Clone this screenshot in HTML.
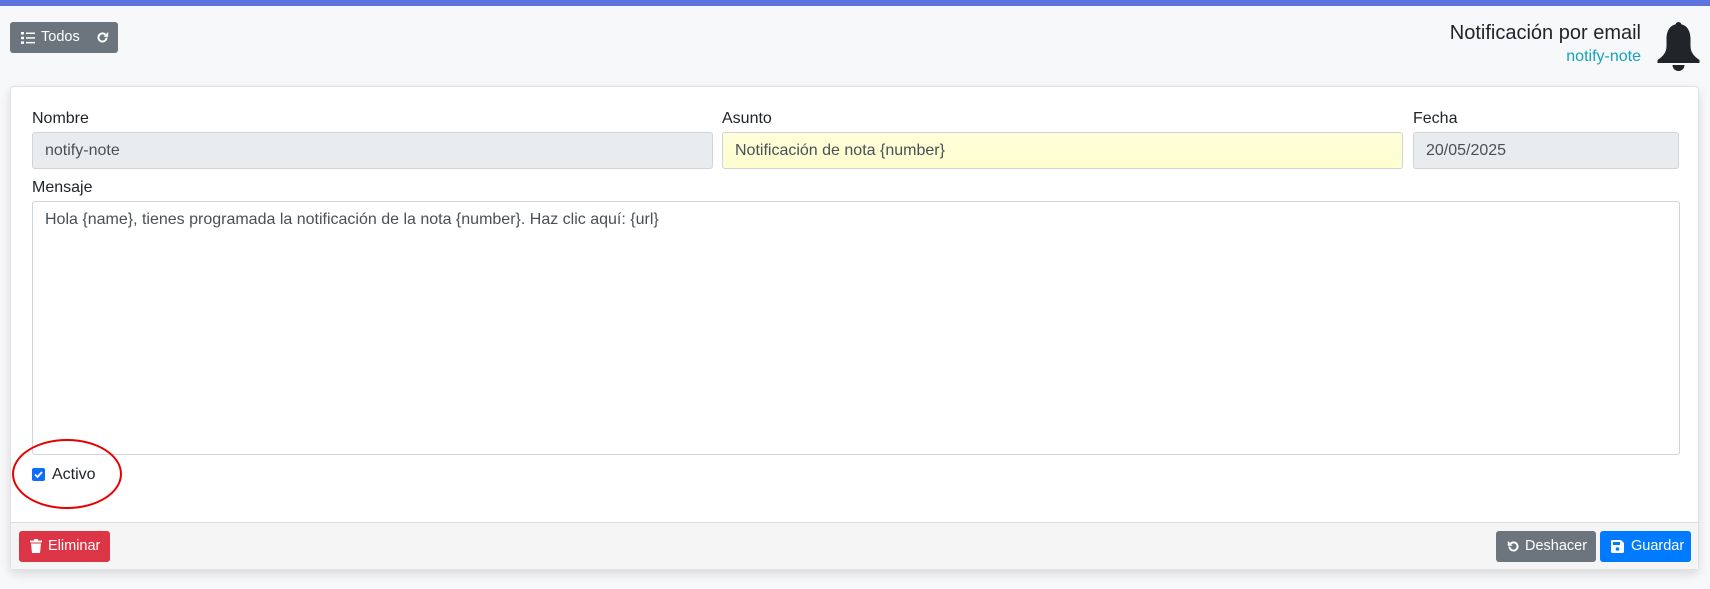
<!DOCTYPE html>
<html><head><meta charset="utf-8"><style>
*{box-sizing:border-box;margin:0;padding:0}
body{width:1710px;height:589px;background:#f7f8fa;font-family:"Liberation Sans",sans-serif;font-size:16px;color:#212529;position:relative;overflow:hidden}
.top{position:absolute;left:0;top:0;width:1710px;height:6px;background:#5f73e0}
.btn{position:absolute;border-radius:3px;color:#fff;font-size:14.5px}
.btn svg{position:absolute;display:block}
.btn span{position:absolute;line-height:31px;top:0}
.card{position:absolute;left:10px;top:86px;width:1689px;height:484px;background:#fff;border:1px solid #dfe1e4;border-radius:4px;box-shadow:0 4px 10px rgba(0,0,0,.12)}
.footer{position:absolute;left:0;right:0;bottom:0;height:47px;background:#f5f5f5;border-top:1px solid #dcdcdc}
.lbl{position:absolute;font-size:16px}
.inp{position:absolute;height:37px;border:1px solid #ced4da;border-radius:3px;padding:0 12px;line-height:35px;color:#495057}
</style></head><body>
<div class="top"></div>
<div class="btn" style="left:10px;top:22px;width:108px;height:31px;background:#6c757d">
<svg style="left:11px;top:10px" width="14" height="12" viewBox="0 0 14 12" fill="#fff"><rect x="0" y="0" width="3" height="2.5"/><rect x="0" y="4.7" width="3" height="2.5"/><rect x="0" y="9.4" width="3" height="2.5"/><rect x="5" y="0.5" width="9" height="1.5"/><rect x="5" y="5.2" width="9" height="1.5"/><rect x="5" y="9.9" width="9" height="1.5"/></svg>
<span style="left:31px">Todos</span>
<svg style="left:86px;top:9px" width="13" height="13" viewBox="0 0 16 16"><path d="M13 8a5 5 0 1 1-1.5-3.6" fill="none" stroke="#fff" stroke-width="2.4"/><path d="M15 1v6h-6z" fill="#fff"/></svg>
</div>
<div style="position:absolute;right:69px;top:22px;font-size:20px;color:#212529">Notificación por email</div>
<div style="position:absolute;right:69px;top:48px;font-size:16px;color:#17a2b8">notify-note</div>
<svg style="position:absolute;left:1657px;top:22px" width="43" height="49" viewBox="0 0 43 49"><circle cx="21.5" cy="3" r="3" fill="#212529"/><path d="M21.5 2C13 2 9.5 9 9.5 17v7c0 6-3 10-9 14v3h42v-3c-6-4-9-8-9-14v-7c0-8-3.5-15-12-15z" fill="#212529"/><path d="M15.5 43h12a6 6 0 0 1-12 0z" fill="#212529"/></svg>
<div class="card">
<div class="lbl" style="left:21px;top:23px">Nombre</div>
<div class="lbl" style="left:711px;top:23px">Asunto</div>
<div class="lbl" style="left:1402px;top:23px">Fecha</div>
<div class="inp" style="left:21px;top:45px;width:681px;background:#e9ecef">notify-note</div>
<div class="inp" style="left:711px;top:45px;width:681px;background:linear-gradient(#fffed8,#fefed0)">Notificación de nota {number}</div>
<div class="inp" style="left:1402px;top:45px;width:266px;background:#e9ecef">20/05/2025</div>
<div class="lbl" style="left:21px;top:92px">Mensaje</div>
<div class="inp" style="left:21px;top:114px;width:1648px;height:254px;background:#fff;line-height:1.5;padding-top:6px">Hola {name}, tienes programada la notificación de la nota {number}. Haz clic aquí: {url}</div>
<div style="position:absolute;left:21px;top:381px;width:13px;height:13px;background:#0d6efd;border-radius:2px"><svg width="13" height="13" viewBox="0 0 13 13"><path d="M3 6.5l2.5 2.5 4.5-5" fill="none" stroke="#fff" stroke-width="1.8"/></svg></div>
<div class="lbl" style="left:41px;top:379px">Activo</div>
<div style="position:absolute;left:1px;top:352px;width:110px;height:70px;border:2.5px solid #e80000;border-radius:50%"></div>
<div class="footer">
<div class="btn" style="left:8px;top:8px;width:91px;height:31px;background:#dc3545">
<svg style="left:11px;top:8px" width="12" height="14" viewBox="0 0 12 14" fill="#fff"><rect x="0" y="1.5" width="12" height="2"/><rect x="4" y="0" width="4" height="2"/><path d="M1 4.5h10l-1 9.5H2z"/></svg>
<span style="left:29px">Eliminar</span></div>
<div class="btn" style="left:1485px;top:8px;width:100px;height:31px;background:#6c757d">
<svg style="left:11px;top:9px" width="13" height="13" viewBox="0 0 16 16"><path d="M3 8a5 5 0 1 0 1.5-3.6" fill="none" stroke="#fff" stroke-width="2.4"/><path d="M1 1v6h6z" fill="#fff"/></svg>
<span style="left:29px">Deshacer</span></div>
<div class="btn" style="left:1589px;top:8px;width:91px;height:31px;background:#007bff">
<svg style="left:11px;top:9px" width="13" height="13" viewBox="0 0 13 13"><path d="M0 1.5Q0 0 1.5 0H10l3 3v8.5Q13 13 11.5 13h-10Q0 13 0 11.5z" fill="#fff"/><rect x="2" y="2" width="7" height="3" fill="#007bff"/><circle cx="6.5" cy="9" r="1.8" fill="#007bff"/></svg>
<span style="left:31px">Guardar</span></div>
</div>
</div>
</body></html>
